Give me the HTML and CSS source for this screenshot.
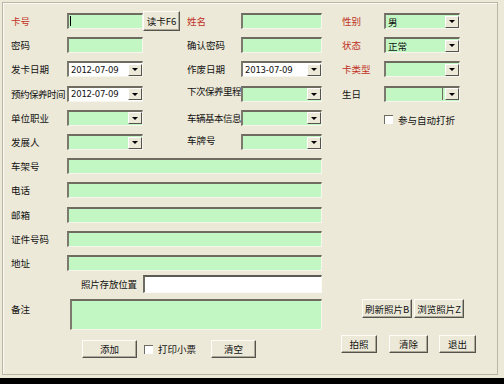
FILE: index.html
```html
<!DOCTYPE html>
<html lang="zh-CN">
<head>
    <meta charset="UTF-8">
    <title>会员信息</title>
    <link rel="stylesheet" href="styles.css">
</head>
<body>
    <div class="window">
        <div class="frame">
            <div class="form">
                <!-- 第一行 -->
                <span class="lbl red">卡号</span>
                <div class="field green caret"></div>
                <button class="btn read-btn">读卡F6</button>
                <span class="lbl red">姓名</span>
                <div class="field green"></div>
                <span></span>
                <span class="lbl red">性别</span>
                <div class="combo green"><span class="val">男</span><span class="drop"></span></div>

                <span class="lbl">密码</span>
                <div class="field green"></div>
                <span></span>
                <span class="lbl">确认密码</span>
                <div class="field green"></div>
                <span></span>
                <span class="lbl red">状态</span>
                <div class="combo green"><span class="val">正常</span><span class="drop"></span></div>

                <span class="lbl">发卡日期</span>
                <div class="combo white"><span class="val date">2012-07-09</span><span class="drop"></span></div>
                <span></span>
                <span class="lbl">作废日期</span>
                <div class="combo white"><span class="val date">2013-07-09</span><span class="drop"></span></div>
                <span></span>
                <span class="lbl red">卡类型</span>
                <div class="combo green"><span class="val"></span><span class="drop"></span></div>

                <span class="lbl tight">预约保养时间</span>
                <div class="combo white"><span class="val date">2012-07-09</span><span class="drop"></span></div>
                <span></span>
                <span class="lbl tight up">下次保养里程</span>
                <div class="combo green"><span class="val"></span><span class="drop"></span></div>
                <span></span>
                <span class="lbl">生日</span>
                <div class="combo green split"><span class="val"></span><span class="drop"></span></div>

                <span class="lbl">单位职业</span>
                <div class="combo green"><span class="val"></span><span class="drop"></span></div>
                <span></span>
                <span class="lbl tight">车辆基本信息</span>
                <div class="combo green"><span class="val"></span><span class="drop"></span></div>
                <span></span>
                <label class="check check-discount"><span class="box"></span>参与自动打折</label>

                <span class="lbl">发展人</span>
                <div class="combo green"><span class="val"></span><span class="drop"></span></div>
                <span></span>
                <span class="lbl up">车牌号</span>
                <div class="combo green"><span class="val"></span><span class="drop"></span></div>
                <span class="rest"></span>

                <span class="lbl">车架号</span>
                <div class="field green wide"></div>
                <span class="rest"></span>

                <span class="lbl">电话</span>
                <div class="field green wide"></div>
                <span class="rest"></span>

                <span class="lbl">邮箱</span>
                <div class="field green wide"></div>
                <span class="rest"></span>

                <span class="lbl">证件号码</span>
                <div class="field green wide"></div>
                <span class="rest"></span>

                <span class="lbl">地址</span>
                <div class="field green wide"></div>
                <span class="rest"></span>

                <span></span>
                <span class="lbl photo-lbl">照片存放位置</span>
                <div class="field white photo-path"></div>
                <span class="rest"></span>

                <span class="lbl memo-lbl">备注</span>
                <div class="field green memo"></div>
                <div class="photo-btns">
                    <button class="btn">刷新照片B</button>
                    <button class="btn">浏览照片Z</button>
                </div>

                <div class="actions-left">
                    <button class="btn add-btn">添加</button>
                    <label class="check"><span class="box"></span>打印小票</label>
                    <button class="btn clear-btn">清空</button>
                </div>
                <div class="actions-right">
                    <button class="btn shot-btn">拍照</button>
                    <button class="btn erase-btn">清除</button>
                    <button class="btn exit-btn">退出</button>
                </div>
            </div>
        </div>
    </div>
</body>
</html>
```

FILE: styles.css
```css
body {
    margin: 0;
    width: 504px;
    height: 384px;
    background-color: #000;
    font-family: "Noto Sans CJK SC", "DejaVu Sans", sans-serif;
    font-size: 9.5px;
    color: #111;
    overflow: hidden;
}
.window {
    height: 378px;
    background-color: #ece9d8;
    padding: 2px;
    box-sizing: border-box;
}
.frame {
    height: 373px;
    width: 496px;
    box-sizing: border-box;
    border: 1px solid #b9b6a6;
    box-shadow: inset 1px 1px 0 #faf9f3;
}
.form {
    display: grid;
    grid-template-columns: 56px 76px 44px 54px 81px 20px 42px 76px;
    grid-template-rows: repeat(11, 24.2px) 21px 34px 40px;
    align-items: center;
    padding: 6px 0 0 8px;
}
.lbl {
    white-space: nowrap;
    line-height: 14px;
}
.lbl.red {
    color: #c03226;
}
.lbl.up {
    margin-top: -5px;
}
.lbl.tight {
    letter-spacing: -0.5px;
}
.field,
.combo {
    height: 16px;
    box-sizing: border-box;
    border-style: solid;
    border-width: 2px 1px 1px 2px;
    border-color: #6e6c60 #f6f5ee #f6f5ee #7c7a6e;
}
.green {
    background-color: #c2f7c4;
}
.white {
    background-color: #fff;
}
.caret {
    position: relative;
}
.caret::before {
    content: "";
    position: absolute;
    left: 1px;
    top: 1px;
    width: 1px;
    height: 10px;
    background-color: #000;
}
.wide {
    grid-column: 2 / 6;
}
.rest {
    grid-column: 6 / 9;
}
.combo {
    display: flex;
    align-items: center;
    padding-left: 2px;
}
.combo .val {
    flex: 1;
    line-height: 12px;
}
.combo .date {
    font-family: "DejaVu Sans", sans-serif;
    font-size: 8.5px;
    letter-spacing: -0.2px;
}
.drop {
    width: 14px;
    height: 12px;
    box-sizing: border-box;
    background-color: #ece9d8;
    border: 1px solid;
    border-color: #fff #55544c #55544c #fff;
    display: flex;
    align-items: center;
    justify-content: center;
}
.drop::after {
    content: "";
    border-left: 3px solid transparent;
    border-right: 3px solid transparent;
    border-top: 3px solid #000;
}
.split .val {
    border-right: 1px solid #6e6c60;
    height: 12px;
    margin-right: 2px;
}
.btn {
    font-family: "Noto Sans CJK SC", sans-serif;
    font-size: 9.5px;
    color: #111;
    background-color: #ece9d8;
    border: 1px solid;
    border-color: #fdfcf7 #55544c #55544c #fdfcf7;
    box-shadow: inset -1px -1px 0 #aca899;
    padding: 0;
    line-height: 14px;
}
.read-btn {
    width: 37px;
    height: 20px;
}
.check {
    display: flex;
    align-items: center;
    gap: 5px;
    white-space: nowrap;
}
.box {
    width: 9px;
    height: 9px;
    box-sizing: border-box;
    background-color: #fff;
    border-style: solid;
    border-width: 1px 0 0 1px;
    border-color: #6e6c60;
}
.check-discount {
    grid-column: 8 / 9;
    margin-top: 4px;
}
.photo-lbl {
    padding-left: 14px;
    letter-spacing: -0.2px;
    align-self: start;
    margin-top: 2px;
}
.photo-path {
    grid-column: 3 / 6;
    align-self: start;
    height: 18px;
    border-color: #5e5c52 #fbfbf8 #fbfbf8 #6e6c60;
}
.memo-lbl {
    align-self: start;
    margin-top: 6px;
}
.memo {
    grid-column: 2 / 6;
    align-self: start;
    height: 31px;
    margin-top: 3px;
    margin-left: 3px;
}
.photo-btns {
    grid-column: 6 / 9;
    align-self: start;
    margin-top: 3px;
    display: flex;
    gap: 2px;
    padding-left: 40px;
}
.photo-btns .btn {
    width: 50px;
    height: 19px;
    flex-shrink: 0;
}
.actions-left {
    grid-column: 1 / 6;
    align-self: start;
    margin-top: 10px;
    display: flex;
    align-items: center;
    padding-left: 71px;
}
.add-btn {
    width: 55px;
    height: 18px;
    margin-right: 7px;
}
.clear-btn {
    width: 45px;
    height: 18px;
    margin-left: 15px;
}
.actions-right {
    grid-column: 6 / 9;
    align-self: start;
    margin-top: 5px;
    display: flex;
    padding-left: 19px;
}
.actions-right .btn {
    height: 18px;
    flex-shrink: 0;
}
.shot-btn {
    width: 36px;
    margin-right: 12px;
}
.erase-btn {
    width: 39px;
    margin-right: 11px;
}
.exit-btn {
    width: 37px;
}
```
